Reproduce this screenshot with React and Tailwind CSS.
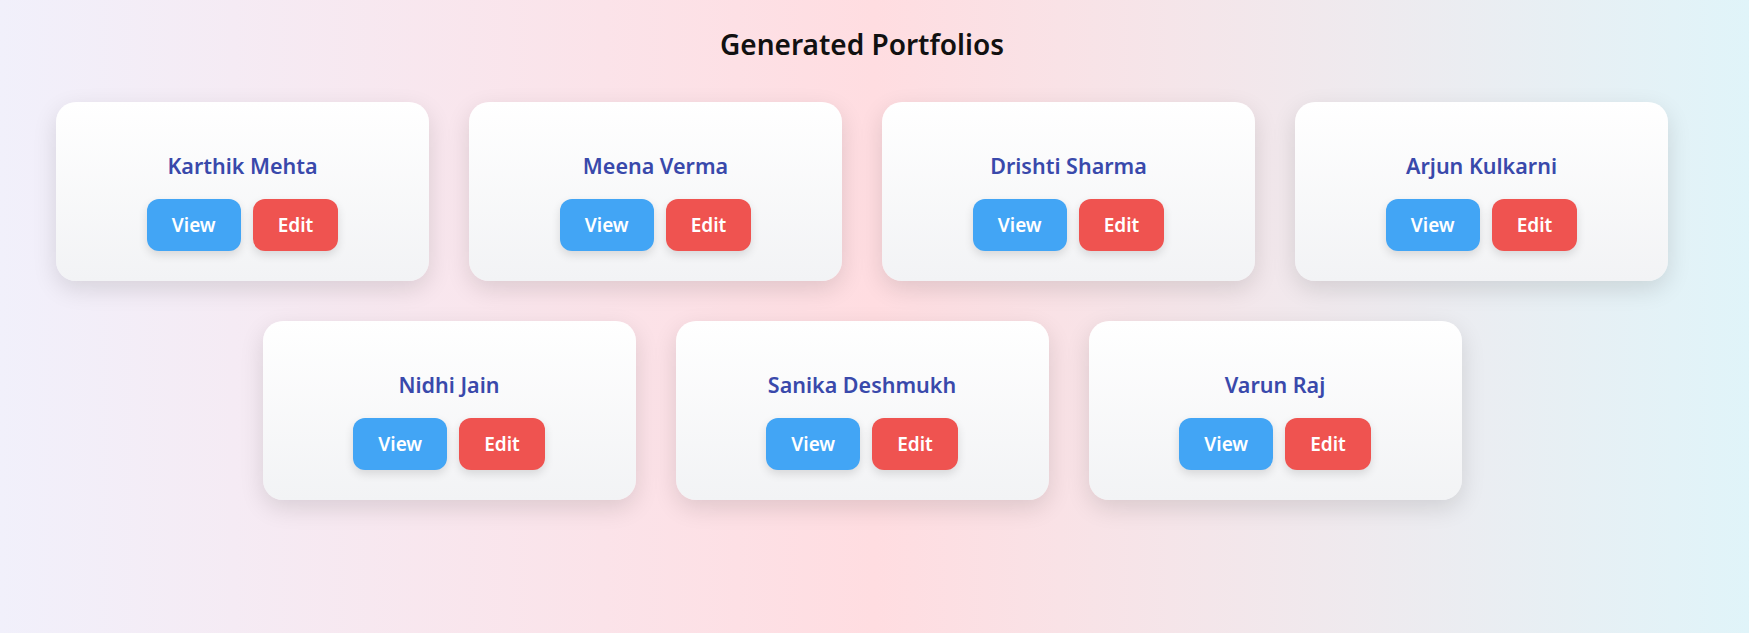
import React from 'react';

const people = [
  'Karthik Mehta',
  'Meena Verma',
  'Drishti Sharma',
  'Arjun Kulkarni',
  'Nidhi Jain',
  'Sanika Deshmukh',
  'Varun Raj',
];

const PortfolioCard = ({ name }) => (
  <div className="w-[373px] h-[179px] rounded-[20px] bg-gradient-to-b from-white to-[#f2f3f5] shadow-[0_8px_24px_rgba(0,0,0,0.12)] flex flex-col items-center pt-[49px]">
    <h3 className="text-[21.5px] leading-[30px] font-semibold text-[#3949ab]">{name}</h3>
    <div className="flex gap-3 mt-[18px]">
      <button className="h-[52px] px-[25px] rounded-xl bg-[#42a5f5] text-white text-[19px] font-semibold shadow-[0_4px_10px_rgba(0,0,0,0.12)]">
        View
      </button>
      <button className="h-[52px] px-[25px] rounded-xl bg-[#ef5350] text-white text-[19px] font-semibold shadow-[0_4px_10px_rgba(0,0,0,0.12)]">
        Edit
      </button>
    </div>
  </div>
);

export default function App() {
  return (
    <div
      className="min-h-[633px] w-full bg-gradient-to-r from-[#f1f0fb] via-[#ffdde1] to-[#e0f4f9] pr-[25px] pt-[25px] pb-10"
      style={{ fontFamily: '"Noto Sans", "Open Sans", sans-serif' }}
    >
      <h2 className="text-center text-[28px] leading-[38px] font-semibold text-[#111]">
        Generated Portfolios
      </h2>
      <div className="flex flex-wrap justify-center gap-10 mt-[39px] px-[56px]">
        {people.map((p) => (
          <PortfolioCard key={p} name={p} />
        ))}
      </div>
    </div>
  );
}
